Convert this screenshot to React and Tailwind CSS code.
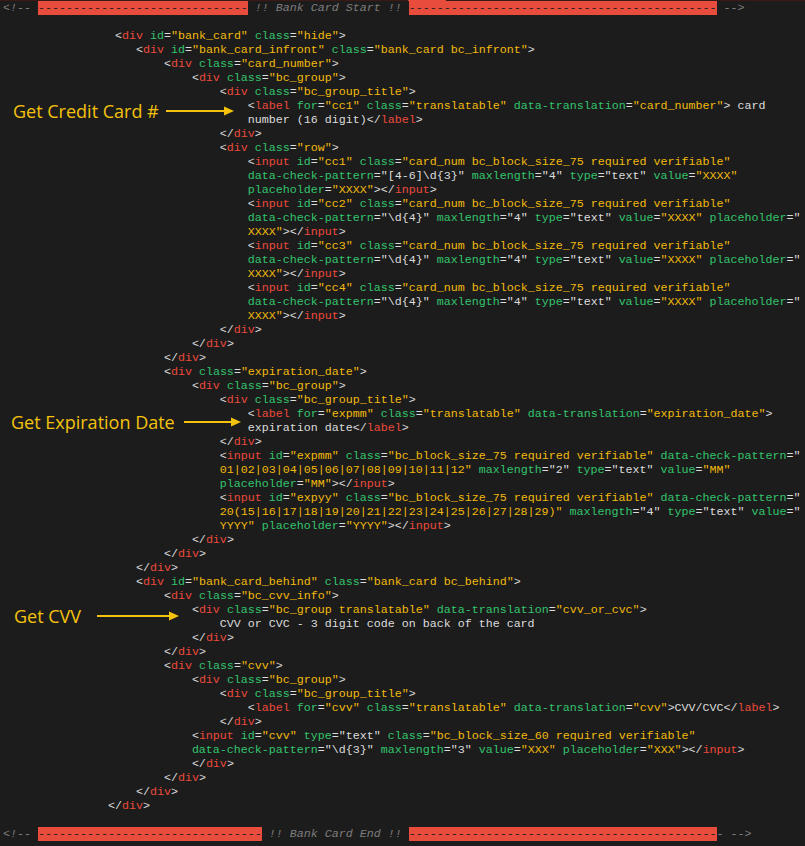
import React from 'react';

const WHITE = new Set(['"[4-6]\\d{3}"', '"\\d{4}"', '"\\d{3}"', '"4"', '"2"', '"3"', '"text"']);

const COLORS = {
  p: 'text-[#dcdcdc]',
  t: 'text-[#ec4a3b]',
  a: 'text-[#33c46c]',
  s: 'text-[#f2ba0c]',
};

// tiny html highlighter, good enough for this snippet
function tokenize(src, cont) {
  const out = [];
  const push = (type, text) => {
    const last = out[out.length - 1];
    if (last && last[0] === type) last[1] += text;
    else out.push([type, text]);
  };
  let i = 0;
  if (cont) {
    const j = src.indexOf('"');
    push('s', src.slice(0, j + 1));
    i = j + 1;
  }
  while (i < src.length) {
    const rest = src.slice(i);
    let m;
    if ((m = rest.match(/^<\/?/))) {
      push('p', m[0]);
      i += m[0].length;
      const t = src.slice(i).match(/^\w+/);
      push('t', t[0]);
      i += t[0].length;
      continue;
    }
    if ((m = rest.match(/^[\w-]+(?==)/))) {
      push('a', m[0]);
      i += m[0].length;
      continue;
    }
    if ((m = rest.match(/^"[^"]*"/))) {
      push(WHITE.has(m[0]) ? 'p' : 's', m[0]);
      i += m[0].length;
      continue;
    }
    push('p', rest[0]);
    i++;
  }
  return out;
}

const lines = [
  { banner: 'start' },
  { n: 0, s: '' },
  { n: 16, s: '<div id="bank_card" class="hide">' },
  { n: 19, s: '<div id="bank_card_infront" class="bank_card bc_infront">' },
  { n: 23, s: '<div class="card_number">' },
  { n: 27, s: '<div class="bc_group">' },
  { n: 31, s: '<div class="bc_group_title">' },
  { n: 35, s: '<label for="cc1" class="translatable" data-translation="card_number"> card' },
  { n: 35, s: 'number (16 digit)</label>' },
  { n: 31, s: '</div>' },
  { n: 31, s: '<div class="row">' },
  { n: 35, s: '<input id="cc1" class="card_num bc_block_size_75 required verifiable"' },
  { n: 35, s: 'data-check-pattern="[4-6]\\d{3}" maxlength="4" type="text" value="XXXX"' },
  { n: 35, s: 'placeholder="XXXX"></input>' },
  { n: 35, s: '<input id="cc2" class="card_num bc_block_size_75 required verifiable"' },
  { n: 35, s: 'data-check-pattern="\\d{4}" maxlength="4" type="text" value="XXXX" placeholder="' },
  { n: 35, s: 'XXXX"></input>', cont: true },
  { n: 35, s: '<input id="cc3" class="card_num bc_block_size_75 required verifiable"' },
  { n: 35, s: 'data-check-pattern="\\d{4}" maxlength="4" type="text" value="XXXX" placeholder="' },
  { n: 35, s: 'XXXX"></input>', cont: true },
  { n: 35, s: '<input id="cc4" class="card_num bc_block_size_75 required verifiable"' },
  { n: 35, s: 'data-check-pattern="\\d{4}" maxlength="4" type="text" value="XXXX" placeholder="' },
  { n: 35, s: 'XXXX"></input>', cont: true },
  { n: 31, s: '</div>' },
  { n: 27, s: '</div>' },
  { n: 23, s: '</div>' },
  { n: 23, s: '<div class="expiration_date">' },
  { n: 27, s: '<div class="bc_group">' },
  { n: 31, s: '<div class="bc_group_title">' },
  { n: 35, s: '<label for="expmm" class="translatable" data-translation="expiration_date">' },
  { n: 35, s: 'expiration date</label>' },
  { n: 31, s: '</div>' },
  { n: 31, s: '<input id="expmm" class="bc_block_size_75 required verifiable" data-check-pattern="' },
  { n: 31, s: '01|02|03|04|05|06|07|08|09|10|11|12" maxlength="2" type="text" value="MM"', cont: true },
  { n: 31, s: 'placeholder="MM"></input>' },
  { n: 31, s: '<input id="expyy" class="bc_block_size_75 required verifiable" data-check-pattern="' },
  { n: 31, s: '20(15|16|17|18|19|20|21|22|23|24|25|26|27|28|29)" maxlength="4" type="text" value="', cont: true },
  { n: 31, s: 'YYYY" placeholder="YYYY"></input>', cont: true },
  { n: 27, s: '</div>' },
  { n: 23, s: '</div>' },
  { n: 19, s: '</div>' },
  { n: 19, s: '<div id="bank_card_behind" class="bank_card bc_behind">' },
  { n: 23, s: '<div class="bc_cvv_info">' },
  { n: 27, s: '<div class="bc_group translatable" data-translation="cvv_or_cvc">' },
  { n: 31, s: 'CVV or CVC - 3 digit code on back of the card' },
  { n: 27, s: '</div>' },
  { n: 23, s: '</div>' },
  { n: 23, s: '<div class="cvv">' },
  { n: 27, s: '<div class="bc_group">' },
  { n: 31, s: '<div class="bc_group_title">' },
  { n: 35, s: '<label for="cvv" class="translatable" data-translation="cvv">CVV/CVC</label>' },
  { n: 31, s: '</div>' },
  { n: 27, s: '<input id="cvv" type="text" class="bc_block_size_60 required verifiable"' },
  { n: 27, s: 'data-check-pattern="\\d{3}" maxlength="3" value="XXX" placeholder="XXX"></input>' },
  { n: 27, s: '</div>' },
  { n: 23, s: '</div>' },
  { n: 19, s: '</div>' },
  { n: 15, s: '</div>' },
  { n: 0, s: '' },
  { banner: 'end' },
];

const Banner = ({ left, label, right, tail }) => (
  <div className="h-[14px] leading-[14px] whitespace-pre">
    <span className="italic text-[#7c7c7c]">{'<!-- '}</span>
    <span className="bg-[#e84c3d] text-[#1c1c1c]">{'-'.repeat(left)}</span>
    <span className="italic text-[#7c7c7c]">{label}</span>
    <span className="bg-[#e84c3d] text-[#1c1c1c]">{'-'.repeat(right)}</span>
    <span className="italic text-[#7c7c7c]">{tail}</span>
  </div>
);

const Arrow = ({ width }) => (
  <svg width={width} height="10" viewBox={`0 0 ${width} 10`} className="shrink-0">
    <rect x="0" y="4" width={width - 9} height="2" fill="#f4c20d" />
    <polygon points={`${width - 10},0.5 ${width},5 ${width - 10},9.5`} fill="#f4c20d" />
  </svg>
);

// callout sitting over the empty gutter of the code
const Note = ({ className, label, arrow }) => (
  <div className={`absolute flex items-center text-[18px] leading-[24px] text-[#f4c20d] whitespace-nowrap font-['Open_Sans',sans-serif] ${className}`}>
    <span>{label}</span>
    <Arrow width={arrow} />
  </div>
);

export default function App() {
  return (
    <div className="relative w-[805px] h-[846px] overflow-hidden bg-[#1c1c1c]">
      {/* thin strip left over from the line above */}
      <div className="flex h-px">
        <div className="w-[408px] bg-[#3b1a15]" />
        <div className="w-[38px] bg-[#e84c3d]" />
        <div className="flex-1 bg-[#3b1a15]" />
      </div>

      <div className="pl-[3px] font-['Liberation_Mono',monospace] text-[11.67px]">
        {lines.map((line, idx) => {
          if (line.banner === 'start') {
            return <Banner key={idx} left={30} label=" !! Bank Card Start !! " right={44} tail=" -->" />;
          }
          if (line.banner === 'end') {
            return <Banner key={idx} left={32} label=" !! Bank Card End !! " right={44} tail="- -->" />;
          }
          return (
            <div key={idx} className="h-[14px] leading-[14px] whitespace-pre text-[#dcdcdc]">
              {' '.repeat(line.n)}
              {tokenize(line.s, line.cont).map(([type, text], k) => (
                <span key={k} className={COLORS[type]}>{text}</span>
              ))}
            </div>
          );
        })}
      </div>

      <Note className="left-[13px] top-[99px] gap-[7px]" label="Get Credit Card #" arrow={68} />
      <Note className="left-[11px] top-[410px] gap-[9px]" label="Get Expiration Date" arrow={57} />
      <Note className="left-[14px] top-[604px] gap-[16px]" label="Get CVV" arrow={82} />
    </div>
  );
}
